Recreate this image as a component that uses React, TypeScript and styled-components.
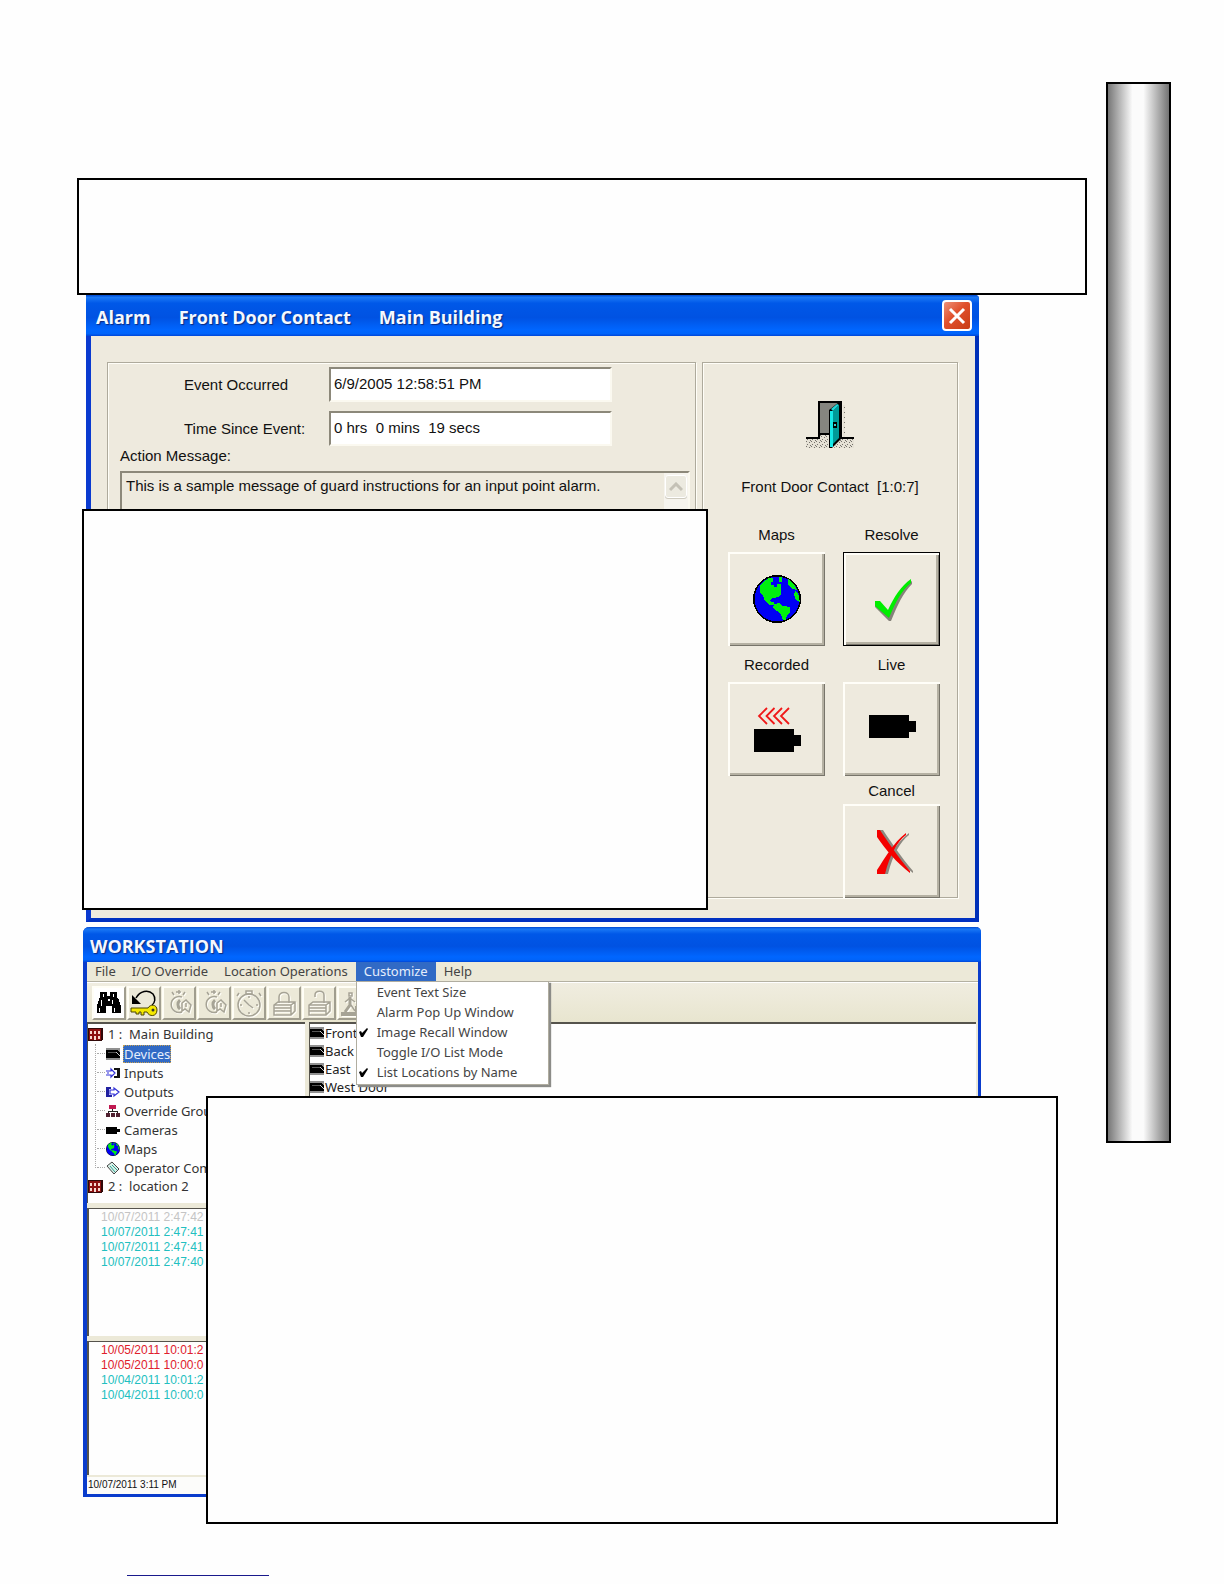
import React from 'react';
import styled, { createGlobalStyle, css } from 'styled-components';

const GlobalStyle = createGlobalStyle`
  *, *::before, *::after { box-sizing: border-box; }
  body { margin: 0; background: #fefefe; color: #111; }
  button, input, textarea { font: inherit; color: inherit; margin: 0; border-radius: 0; }
  ul { list-style: none; margin: 0; padding: 0; }
  svg { display: block; flex: none; }
`;

const sans = '"Liberation Sans", Arial, sans-serif';
const ui = '"Noto Sans", Tahoma, sans-serif';
const face = '#eeeade';
const titleBlue =
  'linear-gradient(#0048d0 0, #1a78f5 6%, #0058e8 20%, #0052e2 55%, #0066ff 85%, #0064fa 94%, #0046d8 100%)';

/* ---------- page ---------- */

const Page = styled.div`
  display: grid;
  grid-template-columns: minmax(0, 1fr) 65px;
  column-gap: 19px;
  padding: 82px 53px 8px 77px;
`;

const Main = styled.main`
  display: flex;
  flex-direction: column;
  padding-top: 96px;
`;

const SideBar = styled.aside`
  height: 67vh;
  border: 2px solid #000;
  background: linear-gradient(90deg, #777 0, #a2a2a2 13%, #fbfbfb 40%, #fbfbfb 58%, #a2a2a2 86%, #737373 100%);
`;

const NoteBox = styled.section`
  border: 2px solid #000;
  background: #fefefe;
`;

const IntroBox = styled(NoteBox)`
  height: 117px;
`;

const AlarmArea = styled.div`
  position: relative;
  margin: 0 108px 0 9px;
`;

const AlarmNote = styled(NoteBox)`
  position: absolute;
  left: -4px;
  right: 271px;
  top: 214px;
  bottom: 12px;
`;

const StationArea = styled.div`
  position: relative;
  margin: 5px 106px 0 6px;
`;

const StationNote = styled(NoteBox)`
  position: absolute;
  left: 123px;
  right: -77px;
  top: 169px;
  bottom: -27px;
  z-index: 3;
`;

const FooterLink = styled.a`
  display: block;
  width: 142px;
  height: 20px;
  margin: 59px 0 0 50px;
  border-bottom: 1px solid #1a1a8c;
`;

/* ---------- alarm window ---------- */

const AlarmWindow = styled.section`
  background: ${face};
  border: solid #0a3ad0;
  border-width: 0 4px 4px 5px;
  border-right-color: #0030b8;
  border-bottom-color: #0030c0;
  border-top-right-radius: 4px;
  font-family: ${sans};
  font-size: 15px;
  line-height: 20px;
`;

const AlarmTitle = styled.header`
  display: flex;
  align-items: center;
  justify-content: space-between;
  height: 41px;
  margin: 0 -4px 0 -5px;
  padding: 0 7px 0 10px;
  border-top-right-radius: 4px;
  background: ${titleBlue};
`;

const AlarmTitleText = styled.h1`
  display: flex;
  gap: 28px;
  margin: 0;
  padding-top: 3px;
  color: #f4f8ff;
  font: 700 18px/24px "Open Sans", "Trebuchet MS", sans-serif;
  text-shadow: 1px 1px 1px #0a2a80;
`;

const CloseButton = styled.button`
  display: grid;
  place-items: center;
  width: 30px;
  height: 31px;
  padding: 0;
  border: 2px solid #fff;
  border-radius: 4px;
  background: linear-gradient(135deg, #ee9078, #e0502c 45%, #c83c14);
`;

const AlarmBody = styled.div`
  display: grid;
  grid-template-columns: minmax(0, 1fr) 256px;
  gap: 6px;
  padding: 26px 17px 20px 16px;
`;

const Group = styled.div`
  display: flex;
  flex-direction: column;
  border: 1px solid #aeaa9c;
  box-shadow: inset 1px 1px #fffef8, 1px 1px #fffef8;
`;

const EventGroup = styled(Group)`
  padding: 4px 5px 12px 12px;
`;

const FieldRow = styled.div`
  display: grid;
  grid-template-columns: 145px 283px;
  align-items: center;
  padding-left: 64px;
  margin-bottom: 9px;
  white-space: nowrap;
  &:nth-child(2) { margin-bottom: 0; }
`;

const sunken = css`
  border: 2px solid;
  border-color: #8c887a #fbf9f0 #fbf9f0 #8c887a;
`;

const Field = styled.input`
  width: 100%;
  height: 35px;
  padding: 0 3px 3px;
  background: #fff;
  outline: 0;
  ${sunken}
`;

const MessageLabel = styled.label`
  margin-bottom: 5px;
`;

const MessageBox = styled.div`
  display: flex;
  flex: 1;
  ${sunken}
`;

const MessageText = styled.textarea`
  flex: 1;
  min-width: 0;
  padding: 3px 4px;
  border: 0;
  outline: 0;
  resize: none;
  overflow: hidden;
  background: transparent;
`;

const ScrollTrack = styled.div`
  width: 24px;
  padding: 2px 1px;
  background: #f6f4ee;
`;

const ScrollButton = styled.button`
  display: grid;
  place-items: center;
  width: 22px;
  height: 23px;
  padding: 0;
  border: 1px solid #fff;
  border-radius: 3px;
  background: #eceae0;
  box-shadow: 0 1px #cfccc0;
`;

const ActionGroup = styled(Group)`
  padding-top: 38px;
`;

const DeviceHead = styled.div`
  display: flex;
  flex-direction: column;
  align-items: center;
  gap: 28px;
  margin-bottom: 28px;
  white-space: pre;
`;

const ActionGrid = styled.div`
  display: grid;
  grid-template-columns: 97px 97px;
  column-gap: 18px;
  row-gap: 9px;
  margin-bottom: -1px;
  padding-left: 25px;
`;

const Action = styled.div<{ $last?: boolean }>`
  display: flex;
  flex-direction: column;
  align-items: center;
  gap: ${p => (p.$last ? 3 : 7)}px;
  grid-column: ${p => (p.$last ? 2 : 'auto')};
  margin-top: ${p => (p.$last ? -4 : 0)}px;
`;

const ActionButton = styled.button<{ $default?: boolean }>`
  display: grid;
  place-items: center;
  width: 97px;
  height: 94px;
  padding: 0;
  border: ${p => (p.$default ? '1px solid #000' : '0')};
  background: ${face};
  box-shadow: inset 2px 2px #fffef8, inset -1px -1px #77746a, inset -3px -3px #b5b1a3;
`;

/* ---------- workstation window ---------- */

const StationWindow = styled.section`
  background: #ece9d8;
  border: solid #0a3ccc;
  border-width: 0 3px 3px 4px;
  border-radius: 6px 5px 0 0;
  font-family: ${ui};
  font-size: 13px;
  line-height: 19px;
  color: #333;
`;

const StationTitle = styled.h2`
  height: 35px;
  margin: 0 -3px 0 -4px;
  padding: 5px 7px 0;
  border-radius: 6px 5px 0 0;
  background: ${titleBlue};
  color: #f4f8ff;
  font: 700 18px/28px "Open Sans", "Trebuchet MS", sans-serif;
  text-shadow: 1px 1px 1px #0a2a80;
`;

const MenuBar = styled.nav`
  display: flex;
  height: 20px;
  border-bottom: 1px solid #b4b1a2;
`;

const MenuSlot = styled.div`
  position: relative;
`;

const MenuButton = styled.button<{ $open?: boolean }>`
  display: block;
  height: 19px;
  padding: 0 8px;
  border: 0;
  line-height: 19px;
  white-space: nowrap;
  background: ${p => (p.$open ? '#316ac5' : 'transparent')};
  color: ${p => (p.$open ? '#e6eefc' : '#444')};
`;

const Popup = styled.div`
  position: absolute;
  z-index: 2;
  top: 19px;
  left: 0;
  width: 193px;
  padding: 0 2px 2px;
  border: 1px solid #b0ada0;
  background: #fff;
  box-shadow: 2px 2px 1px #8c8c88;
`;

const PopupItem = styled.button`
  display: grid;
  grid-template-columns: 18px 1fr;
  align-items: center;
  width: 100%;
  height: 20px;
  padding: 0;
  border: 0;
  background: none;
  text-align: left;
  white-space: nowrap;
  color: #444;
`;

const PopupText = styled.span`
  grid-column: 2;
`;

const ToolBar = styled.div`
  display: flex;
  gap: 1px;
  height: 40px;
  padding: 3px 5px;
  border-top: 1px solid #fff;
  background: linear-gradient(#f0ede0, #e8e5cf);
`;

const ToolButton = styled.button<{ $lit?: boolean }>`
  display: grid;
  place-items: center;
  width: 34px;
  height: 34px;
  padding: 0;
  border: 2px solid;
  border-color: #fffef6 #a09d8e #a09d8e #fffef6;
  background: ${p => (p.$lit ? '#fff' : '#ece9d8')};
`;

const Panes = styled.div`
  display: grid;
  grid-template-columns: 218px minmax(0, 1fr);
  gap: 4px;
  height: 181px;
  padding-right: 2px;
`;

const Pane = styled.div`
  border: solid #55534c;
  border-width: 2px 0 0 1px;
  background: #fefefe;
  overflow: hidden;
`;

const Tree = styled.ul`
  padding-top: 1px;
`;

const TreeRow = styled.li`
  display: flex;
  align-items: center;
  gap: 5px;
  height: 19px;
  white-space: pre;
`;

const Branch = styled.ul`
  position: relative;
  padding-left: 18px;
  &::before {
    content: '';
    position: absolute;
    left: 7px;
    top: 0;
    bottom: 9px;
    border-left: 1px dotted #aaa;
  }
`;

const Leaf = styled(TreeRow)`
  gap: 3px;
  &::before {
    content: '';
    width: 8px;
    margin: 0 -2px 0 -9px;
    border-top: 1px dotted #aaa;
  }
`;

const LeafText = styled.span<{ $on?: boolean }>`
  padding: 0 1px;
  line-height: 18px;
  ${p => p.$on && 'background: #316ac5; color: #e6eefc; outline: 1px dotted #c8a050; outline-offset: -1px;'}
`;

const DeviceRow = styled.li`
  display: flex;
  align-items: center;
  gap: 1px;
  height: 18px;
  white-space: nowrap;
  color: #222;
`;

const Log = styled.ul`
  height: 128px;
  margin-top: 5px;
  padding: 1px 12px;
  border: solid #55534c;
  border-width: 1px 0 0 2px;
  background: #fefefe;
  font-family: ${sans};
  font-size: 12px;
  line-height: 15px;
  & + & { height: 134px; }
`;

const LogRow = styled.li<{ $tone: string }>`
  color: ${p => p.$tone};
`;

const StatusBar = styled.footer`
  height: 17px;
  margin-top: 2px;
  padding: 0 1px;
  background: #fcfcfa;
  font: 10px/15px ${sans};
  color: #111;
`;

/* ---------- drawings ---------- */

const DoorIcon = () => (
  <svg width="48" height="48" viewBox="0 0 48 48" aria-hidden="true">
    <defs>
      <pattern id="speck" width="5" height="5" patternUnits="userSpaceOnUse">
        <rect width="5" height="5" fill="#e6e2d6" />
        <path d="M0 0h1v1H0zM3 1h1v1H3zM1 3h1v1H1zM4 4h1v1H4z" fill="#76736c" />
      </pattern>
    </defs>
    <path d="M0 38h14v-5h10v14H0zM30 44l6-7h12v10H28z" fill="url(#speck)" />
    <path d="M37 4h2v32h-2z" fill="url(#speck)" />
    <path d="M0 36h13v2H0zM36 36h12v2H36z" fill="#000" />
    <path d="M12 0h24v38h-3V2H14v30h10v2H14v4h-2z" fill="#000" />
    <path d="M14 2h19v30H14z" fill="#85857f" />
    <path d="M23 9 33 1h2v37L26 47h-3z" fill="#000" />
    <path d="M27 10l6-6v33l-6 6z" fill="#009a98" />
    <path d="M24 10h3v36h-3z" fill="#18e8e8" />
    <path d="M25 8l6-5 2 1-6 6z" fill="#20d8d8" />
    <path d="M27 21h4v6h-4z" fill="#000" />
    <path d="M28 23h2v2h-2z" fill="#30d0d0" />
  </svg>
);

const Globe = ({ size }: { size: number }) => (
  <svg width={size} height={size} viewBox="0 0 48 48" shapeRendering={size > 20 ? 'crispEdges' : 'auto'} aria-hidden="true">
    <circle cx="24" cy="24" r="24" fill="#000" />
    <circle cx="24" cy="24" r="22.500" fill="#0000f4" />
    <path d="M10 7l6-4h4v4h-2v3h3v2h3V9h4v10l-3 3-5 1-3 2 1 2h3v3h-4l-5-4-2-5-3-4v-7z" fill="#00f010" />
    <path d="M21 29l5-1 4 3 7 1v5l-3 3-1 5h-3l-2-6-4-3-4-3z" fill="#00f010" />
    <path d="M26 2h3v5h-3zM35 4l6 5 3 6-5-1-4-5zM42 16l3 2 2 9-4-2-2-5z" fill="#00f010" />
  </svg>
);

const CheckIcon = () => (
  <svg width="48" height="48" viewBox="0 0 48 48" aria-hidden="true">
    <path d="M7 29l4-1 9 9C27 23 33 13 44 6v3C35 18 30 29 23 46h-2L7 32z" fill="#85827a" />
    <path d="M7 26h5l8 9C26 22 33 11 43 4v4C34 15 28 26 21 43L7 31z" fill="#00ee00" />
  </svg>
);

const BodyPath = ({ y }: { y: number }) => (
  <path d={`M.5 ${y}h40v6h7v11h-7v6H.5z`} fill="#000" shapeRendering="crispEdges" />
);

const LiveIcon = () => (
  <svg width="48" height="48" viewBox="0 0 48 48" aria-hidden="true">
    <BodyPath y={10} />
  </svg>
);

const RecordedIcon = () => (
  <svg width="48" height="48" viewBox="0 0 48 48" aria-hidden="true">
    <BodyPath y={24} />
    <path d="M14 3l-8 8 8 8M21.500 3l-8 8 8 8M29 3l-8 8 8 8M36 3l-8 8 8 8" fill="none" stroke="#f01818" strokeWidth="1.8" />
  </svg>
);

const Cross = ({ fill }: { fill: string }) => (
  <path
    fill={fill}
    d="M9 3h3c8 12 18 27 30 41v2C29 36 17 22 9 10zM38 6v2C29 15 22 27 17 47H9v-4C17 31 25 16 38 6z"
  />
);

const CancelIcon = () => (
  <svg width="48" height="48" viewBox="0 0 48 48" aria-hidden="true">
    <g transform="translate(3 0)"><Cross fill="#8c8880" /></g>
    <Cross fill="#f40000" />
  </svg>
);

const BuildingIcon = () => (
  <svg width="15" height="13" viewBox="0 0 15 13" shapeRendering="crispEdges" aria-hidden="true">
    <path d="M0 0h15v11l-2 2H0z" fill="#300808" />
    <path d="M1 1h12v11H1z" fill="#8c1010" />
    <path d="M2 3h2v3H2zM6 3h2v3H6zM10 3h2v3h-2zM2 8h2v3H2zM6 8h2v4H6zM10 8h2v3h-2z" fill="#f8d8d0" />
  </svg>
);

const ReaderIcon = () => (
  <svg width="14" height="12" viewBox="0 0 14 12" shapeRendering="crispEdges" aria-hidden="true">
    <path d="M0 0h14v12H0z" fill="#909090" />
    <path d="M0 2h11l3 3v5H0z" fill="#000" />
    <path d="M2 4h8v1H2z" fill="#555" />
    <path d="M10 4h1l3 4H13z" fill="#ccc" />
  </svg>
);

const InputIcon = () => (
  <svg width="14" height="12" viewBox="0 0 14 12" aria-hidden="true">
    <path d="M8 1h6v10H8v-2h3V3H8z" fill="#111" />
    <path d="M0 4h5V2l4 4-4 4V8H0M1 6h2" fill="#fff" stroke="#3030d8" strokeWidth="1.200" />
  </svg>
);

const OutputIcon = () => (
  <svg width="14" height="12" viewBox="0 0 14 12" aria-hidden="true">
    <path d="M0 1h5v2H3v6h3v2H0z" fill="#2020a0" />
    <path d="M4 4h4V2l5 4-5 4V8H4z" fill="#fff" stroke="#3030d8" strokeWidth="1.200" />
  </svg>
);

const GroupIcon = () => (
  <svg width="14" height="12" viewBox="0 0 14 12" shapeRendering="crispEdges" aria-hidden="true">
    <path d="M3 0h7v4H3z" fill="#c01850" />
    <path d="M6 4h1v2h5v3h-1V7H3v2H2V6h4z" fill="#222" />
    <path d="M0 8h4v4H0zM5 8h4v4H5zM10 8h4v4h-4z" fill="#502030" />
  </svg>
);

const CameraIcon = () => (
  <svg width="14" height="12" viewBox="0 0 14 12" shapeRendering="crispEdges" aria-hidden="true">
    <path d="M0 3h11v2h3v3h-3v2H0z" fill="#000" />
  </svg>
);

const CommentIcon = () => (
  <svg width="14" height="14" viewBox="0 0 14 14" aria-hidden="true">
    <path d="M1 5l5-4 7 7-5 5z" fill="#d8f0e8" stroke="#444" />
    <path d="M4 5l5 6M6 4l5 5" stroke="#30a090" />
  </svg>
);

const TickIcon = () => (
  <svg width="9" height="9" viewBox="0 0 9 9" aria-hidden="true">
    <path d="M0 4l2-1 1 2 5-5 1 1-5 8H2z" fill="#000" />
  </svg>
);

const Binoculars = () => (
  <svg width="28" height="26" viewBox="0 0 28 26" shapeRendering="crispEdges" aria-hidden="true">
    <path d="M5 2h7v4h3V2h7v5l2 3 2 6v7h-9v-7h-6v7H2v-7l2-6 1-3z" fill="#000" />
    <path d="M8 4h1v3H8zM18 4h1v3h-1zM6 10h1v6H6zM17 10h1v4h-1zM4 18h1v4H4zM19 18h1v4h-1zM13 9h2v2h-2z" fill="#fff" />
  </svg>
);

const KeyIcon = () => (
  <svg width="30" height="30" viewBox="0 0 30 30" aria-hidden="true">
    <path d="M7 10c4-7 12-9 17-4 3 4 2 9-1 11" fill="none" stroke="#000" strokeWidth="1.500" />
    <path d="M3 7v9h9z" fill="#000" />
    <path d="M2 20h17c2-4 9-4 9 2 0 7-8 7-10 2h-3v3h-3v-3h-2v2H7v-2H2z" fill="#f4e800" stroke="#4a4400" />
    <circle cx="24" cy="22" r="1.500" fill="#333" />
  </svg>
);

const Embossed = ({ children }: { children: React.ReactNode }) => (
  <svg width="30" height="30" viewBox="0 0 30 30" fill="none" strokeWidth="1.500" aria-hidden="true">
    <g stroke="#fffef8" transform="translate(1 1)">{children}</g>
    <g stroke="#a6a395">{children}</g>
  </svg>
);

const BellShape = () => (
  <>
    <path d="M18 9a8 8 0 1 0 0 15" />
    <path d="M16 12a6 6 0 0 0 0 9" strokeWidth="3" />
    <path d="M12 4h5M15 2v4M8 4l2 3M21 4l-2 3M18 15l4-3 5 5-2 7-4-3-3 2zM22 15v4" />
  </>
);

const ClockShape = () => (
  <>
    <circle cx="15" cy="17" r="11" />
    <path d="M15 17l-5-5M15 17l4 3M12 3h6v3h-6zM5 5L3 8M25 5l2 3M15 8v2M15 24v2M6 17h2M22 17h2" />
  </>
);

const LockShape = ({ open }: { open?: boolean }) => (
  <>
    <path d={open ? 'M11 9V7c0-5 9-5 9 0v8' : 'M10 15V9c0-6 10-6 10 0v6'} />
    <path d="M5 17l4-3h17v9l-4 4H5zM5 17h17v10M22 17l4-3M5 20h17M5 23h17" />
  </>
);

const ExitShape = () => (
  <>
    <path d="M10 5h3v3h-3zM11 10l-5 4M12 17l4 6M12 11l4 3M18 5h10v22" />
    <path d="M11 9v8l-5 7" strokeWidth="3" />
    <path d="M2 26h16v-6h8" strokeWidth="4" />
  </>
);

/* ---------- data ---------- */

const leaves: { name: string; icon: React.ReactNode; on?: boolean }[] = [
  { name: 'Devices', icon: <ReaderIcon />, on: true },
  { name: 'Inputs', icon: <InputIcon /> },
  { name: 'Outputs', icon: <OutputIcon /> },
  { name: 'Override Groups', icon: <GroupIcon /> },
  { name: 'Cameras', icon: <CameraIcon /> },
  { name: 'Maps', icon: <Globe size={14} /> },
  { name: 'Operator Comments', icon: <CommentIcon /> },
];

const tools: { name: string; icon: React.ReactNode; lit?: boolean }[] = [
  { name: 'Find', icon: <Binoculars />, lit: true },
  { name: 'Key', icon: <KeyIcon /> },
  { name: 'Alarm bell', icon: <Embossed><BellShape /></Embossed> },
  { name: 'Alarm bell off', icon: <Embossed><BellShape /></Embossed> },
  { name: 'Timer', icon: <Embossed><ClockShape /></Embossed> },
  { name: 'Lock', icon: <Embossed><LockShape /></Embossed> },
  { name: 'Unlock', icon: <Embossed><LockShape open /></Embossed> },
  { name: 'Exit', icon: <Embossed><ExitShape /></Embossed> },
];

const options = [
  { text: 'Event Text Size' },
  { text: 'Alarm Pop Up Window' },
  { text: 'Image Recall Window', checked: true },
  { text: 'Toggle I/O List Mode' },
  { text: 'List Locations by Name', checked: true },
];

const actions = [
  { id: 'maps', text: 'Maps', icon: <Globe size={48} /> },
  { id: 'resolve', text: 'Resolve', icon: <CheckIcon />, def: true },
  { id: 'recorded', text: 'Recorded', icon: <RecordedIcon /> },
  { id: 'live', text: 'Live', icon: <LiveIcon /> },
  { id: 'cancel', text: 'Cancel', icon: <CancelIcon />, last: true },
];

const gray = '#c4c4c4';
const cyan = '#22bfc0';
const red = '#e0202c';

const recent = [
  ['10/07/2011 2:47:42', gray],
  ['10/07/2011 2:47:41', cyan],
  ['10/07/2011 2:47:41', cyan],
  ['10/07/2011 2:47:40', cyan],
];

const earlier = [
  ['10/05/2011 10:01:2', red],
  ['10/05/2011 10:00:0', red],
  ['10/04/2011 10:01:2', cyan],
  ['10/04/2011 10:00:0', cyan],
];

const AlarmDialog = () => (
  <AlarmWindow>
    <AlarmTitle>
      <AlarmTitleText>
        <span>Alarm</span>
        <span>Front Door Contact</span>
        <span>Main Building</span>
      </AlarmTitleText>
      <CloseButton aria-label="Close">
        <svg width="18" height="18" viewBox="0 0 18 18" aria-hidden="true">
          <path d="M2 2l14 14M16 2L2 16" stroke="#fff" strokeWidth="3" />
        </svg>
      </CloseButton>
    </AlarmTitle>
    <AlarmBody>
      <EventGroup>
        <FieldRow>
          <label htmlFor="occurred">Event Occurred</label>
          <Field id="occurred" readOnly value="6/9/2005 12:58:51 PM" />
        </FieldRow>
        <FieldRow>
          <label htmlFor="since">Time Since Event:</label>
          <Field id="since" readOnly value="0 hrs  0 mins  19 secs" />
        </FieldRow>
        <MessageLabel htmlFor="message">Action Message:</MessageLabel>
        <MessageBox>
          <MessageText
            id="message"
            readOnly
            value="This is a sample message of guard instructions for an input point alarm."
          />
          <ScrollTrack>
            <ScrollButton aria-label="Scroll up">
              <svg width="14" height="10" viewBox="0 0 14 10" aria-hidden="true">
                <path d="M1 8l6-6 6 6" fill="none" stroke="#c4c1b6" strokeWidth="3" />
              </svg>
            </ScrollButton>
          </ScrollTrack>
        </MessageBox>
      </EventGroup>
      <ActionGroup>
        <DeviceHead>
          <DoorIcon />
          <span>{'Front Door Contact  [1:0:7]'}</span>
        </DeviceHead>
        <ActionGrid>
          {actions.map(a => (
            <Action key={a.id} $last={a.last}>
              <label htmlFor={a.id}>{a.text}</label>
              <ActionButton id={a.id} $default={a.def}>{a.icon}</ActionButton>
            </Action>
          ))}
        </ActionGrid>
      </ActionGroup>
    </AlarmBody>
  </AlarmWindow>
);

const Workstation = () => (
  <StationWindow>
    <StationTitle>WORKSTATION</StationTitle>
    <MenuBar>
      <MenuButton>File</MenuButton>
      <MenuButton>I/O Override</MenuButton>
      <MenuButton>Location Operations</MenuButton>
      <MenuSlot>
        <MenuButton $open>Customize</MenuButton>
        <Popup role="menu">
          {options.map(o => (
            <PopupItem key={o.text} role="menuitemcheckbox" aria-checked={!!o.checked}>
              {o.checked && <TickIcon />}
              <PopupText>{o.text}</PopupText>
            </PopupItem>
          ))}
        </Popup>
      </MenuSlot>
      <MenuButton>Help</MenuButton>
    </MenuBar>
    <ToolBar>
      {tools.map(t => (
        <ToolButton key={t.name} aria-label={t.name} $lit={t.lit}>{t.icon}</ToolButton>
      ))}
    </ToolBar>
    <Panes>
      <Pane>
        <Tree>
          <TreeRow><BuildingIcon /><span>{'1 :  Main Building'}</span></TreeRow>
          <li>
            <Branch>
              {leaves.map(l => (
                <Leaf key={l.name}>{l.icon}<LeafText $on={l.on}>{l.name}</LeafText></Leaf>
              ))}
            </Branch>
          </li>
          <TreeRow><BuildingIcon /><span>{'2 :  location 2'}</span></TreeRow>
        </Tree>
      </Pane>
      <Pane>
        <ul>
          {['Front', 'Back', 'East', 'West Door'].map(d => (
            <DeviceRow key={d}><ReaderIcon /><span>{d}</span></DeviceRow>
          ))}
        </ul>
      </Pane>
    </Panes>
    <Log>
      {recent.map(([text, tone], i) => <LogRow key={i} $tone={tone}>{text}</LogRow>)}
    </Log>
    <Log>
      {earlier.map(([text, tone], i) => <LogRow key={i} $tone={tone}>{text}</LogRow>)}
    </Log>
    <StatusBar>10/07/2011 3:11 PM</StatusBar>
  </StationWindow>
);

export default function App() {
  return (
    <>
      <GlobalStyle />
      <Page>
        <Main>
          <IntroBox />
          <AlarmArea>
            <AlarmDialog />
            <AlarmNote />
          </AlarmArea>
          <StationArea>
            <Workstation />
            <StationNote />
          </StationArea>
          <FooterLink href="#top" aria-label="Back to top" />
        </Main>
        <SideBar />
      </Page>
    </>
  );
}
